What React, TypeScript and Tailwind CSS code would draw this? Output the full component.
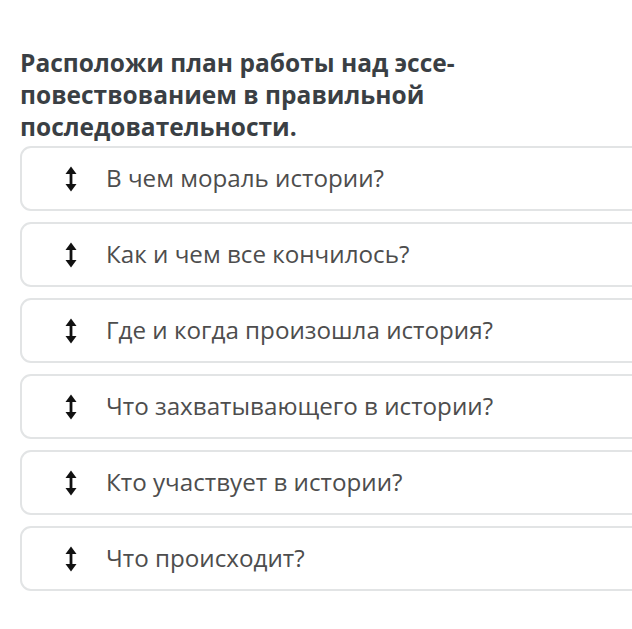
import React from "react";

const items = [
  "В чем мораль истории?",
  "Как и чем все кончилось?",
  "Где и когда произошла история?",
  "Что захватывающего в истории?",
  "Кто участвует в истории?",
  "Что происходит?",
];

function Arrow() {
  return (
    <svg width="12" height="26" viewBox="0 0 12 26" className="shrink-0">
      <path d="M6 0.5 L11.5 8 L0.5 8 Z" fill="#111" />
      <path d="M6 25.5 L11.5 18 L0.5 18 Z" fill="#111" />
      <rect x="4.6" y="6" width="2.8" height="14" fill="#111" />
    </svg>
  );
}

export default function App() {
  return (
    <div
      className="w-[632px] h-[629px] bg-white overflow-hidden pt-[47px] pl-[20px]"
      style={{ fontFamily: '"Open Sans", "Noto Sans", sans-serif' }}
    >
      <h1 className="text-[24.5px] leading-[32px] font-bold text-[#3a3f44] w-[450px]">
        Расположи план работы над эссе-повествованием в правильной последовательности.
      </h1>
      <div className="mt-[3px] flex flex-col gap-[11px] w-[640px]">
        {items.map((t) => (
          <div
            key={t}
            className="h-[65px] border-2 border-[#e2e4e5] rounded-[11px] flex items-center pl-[43px]"
          >
            <Arrow />
            <span className="ml-[29px] text-[24.2px] text-[#4d4d4d] leading-none">{t}</span>
          </div>
        ))}
      </div>
    </div>
  );
}
